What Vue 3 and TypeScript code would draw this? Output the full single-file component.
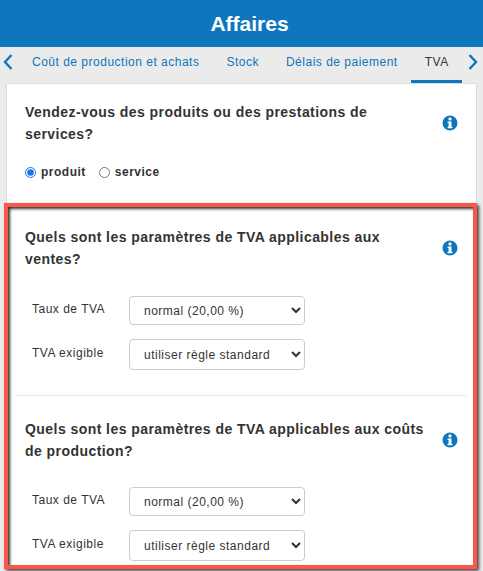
<script setup lang="ts">
import { ref } from 'vue';

interface VatBlock {
  title: string;
  rate: string;
  rule: string;
}

const tabs = ['Coût de production et achats', 'Stock', 'Délais de paiement', 'TVA'];
const activeTab = ref('TVA');
const saleType = ref('produit');

const blocks = ref<VatBlock[]>([
  { title: 'Quels sont les paramètres de TVA applicables aux ventes?', rate: 'normal (20,00 %)', rule: 'utiliser règle standard' },
  { title: 'Quels sont les paramètres de TVA applicables aux coûts de production?', rate: 'normal (20,00 %)', rule: 'utiliser règle standard' },
]);
</script>

<template>
  <div class="page">
    <header class="top-bar">Affaires</header>

    <nav class="tab-bar">
      <svg class="chevron" width="12" height="16" viewBox="0 0 12 16">
        <path d="M9.5 1 3 8l6.5 7" fill="none" stroke="#0e76bc" stroke-width="2.4" />
      </svg>
      <div class="tabs">
        <a
          v-for="tab in tabs"
          :key="tab"
          class="tab"
          :class="{ active: tab === activeTab }"
        >{{ tab }}</a>
      </div>
      <svg class="chevron" width="12" height="16" viewBox="0 0 12 16">
        <path d="M2.5 1 9 8l-6.5 7" fill="none" stroke="#0e76bc" stroke-width="2.4" />
      </svg>
    </nav>

    <main class="card">
      <section class="block first">
        <div class="question">
          <h2>Vendez-vous des produits ou des prestations de services?</h2>
          <svg class="info" width="16" height="16" viewBox="0 0 16 16">
            <circle cx="8" cy="8" r="7.5" fill="#0e76bc" />
            <circle cx="8" cy="3.9" r="1.6" fill="#fff" />
            <path d="M5.6 6.4h3.9v5.3h1v1.6H5.6v-1.6h1V8H5.6z" fill="#fff" />
          </svg>
        </div>
        <div class="radios">
          <label class="radio">
            <input v-model="saleType" type="radio" value="produit" />
            <span>produit</span>
          </label>
          <label class="radio">
            <input v-model="saleType" type="radio" value="service" />
            <span>service</span>
          </label>
        </div>
      </section>

      <section v-for="block in blocks" :key="block.title" class="block">
        <div class="question">
          <h2>{{ block.title }}</h2>
          <svg class="info" width="16" height="16" viewBox="0 0 16 16">
            <circle cx="8" cy="8" r="7.5" fill="#0e76bc" />
            <circle cx="8" cy="3.9" r="1.6" fill="#fff" />
            <path d="M5.6 6.4h3.9v5.3h1v1.6H5.6v-1.6h1V8H5.6z" fill="#fff" />
          </svg>
        </div>
        <div class="field">
          <label>Taux de TVA</label>
          <select v-model="block.rate">
            <option>normal (20,00 %)</option>
            <option>réduit (5,50 %)</option>
          </select>
        </div>
        <div class="field">
          <label>TVA exigible</label>
          <select v-model="block.rule" class="tall">
            <option>utiliser règle standard</option>
            <option>à la livraison</option>
          </select>
        </div>
      </section>
    </main>

    <!-- annotation frame drawn over the screenshot -->
    <div class="highlight"></div>
  </div>
</template>

<style scoped>
.page {
  position: relative;
  width: 483px;
  height: 571px;
  overflow: hidden;
  background: #ebebeb;
  font-family: "Liberation Sans", Arial, sans-serif;
  color: #333;
}
.top-bar {
  height: 47px;
  line-height: 47px;
  padding-left: 16px;
  background: #0e76bc;
  color: #fff;
  text-align: center;
  font-size: 21px;
  font-weight: bold;
}
.tab-bar {
  display: flex;
  align-items: center;
  justify-content: space-between;
  height: 36px;
  padding: 0 4px 0 2px;
}
.chevron {
  flex: none;
  margin-bottom: 7px;
}
.tabs {
  display: flex;
  flex: 1;
  height: 100%;
  padding-left: 4.5px;
}
.tab {
  box-sizing: border-box;
  height: 36px;
  padding: 0 13.5px;
  line-height: 30px;
  font-size: 12px;
  letter-spacing: 0.5px;
  color: #0e76bc;
  white-space: nowrap;
}
.tab.active {
  color: #333;
  border-bottom: 3px solid #0e76bc;
}
.card {
  margin: 0 6px;
  border: 1px solid #ddd;
  border-bottom: 0;
  background: #fff;
  padding: 0 9px;
}
.block {
  padding: 22px 0 25px;
  border-top: 1px solid #e6e6e6;
}
.block.first {
  border-top: 0;
  padding: 17px 0 29px;
}
.block:nth-child(2) {
  border-top: 0;
  padding-top: 18px;
}
.question {
  display: flex;
  align-items: center;
  justify-content: space-between;
  padding: 0 2px 0 9px;
}
.question h2 {
  margin: 0;
  width: 402px;
  font-size: 14px;
  line-height: 22px;
  font-weight: bold;
  letter-spacing: 0.44px;
}
.info {
  flex: none;
  margin-right: 7px;
}
.radios {
  display: flex;
  gap: 13px;
  margin-top: 20px;
  padding-left: 9px;
}
.radio {
  display: flex;
  align-items: center;
  gap: 5px;
  font-size: 12px;
  font-weight: bold;
  letter-spacing: 0.5px;
}
.radio input {
  width: 11px;
  height: 11px;
  margin: 0;
  accent-color: #1a73e8;
}
.field {
  display: flex;
  align-items: center;
  margin-top: 14px;
  padding-left: 16px;
}
.question + .field {
  margin-top: 26px;
}
.block:nth-child(3) .question + .field {
  margin-top: 25px;
}
.field label {
  width: 97px;
  margin-bottom: 3px;
  font-size: 12px;
  letter-spacing: 0.5px;
}
.field select {
  box-sizing: border-box;
  width: 176px;
  height: 29px;
  padding-left: 10px;
  border: 1px solid #ccc;
  border-radius: 4px;
  background-color: #fff;
  font-family: inherit;
  font-size: 12px;
  letter-spacing: 0.5px;
  color: #333;
}
.field select.tall {
  height: 31px;
}
.highlight {
  position: absolute;
  left: 4px;
  top: 203px;
  width: 473px;
  height: 366px;
  box-sizing: border-box;
  border: 4px solid #fd5549;
  box-shadow: 2px 2px 3px #444, inset 2px 2px 3px #333;
  pointer-events: none;
}
</style>
